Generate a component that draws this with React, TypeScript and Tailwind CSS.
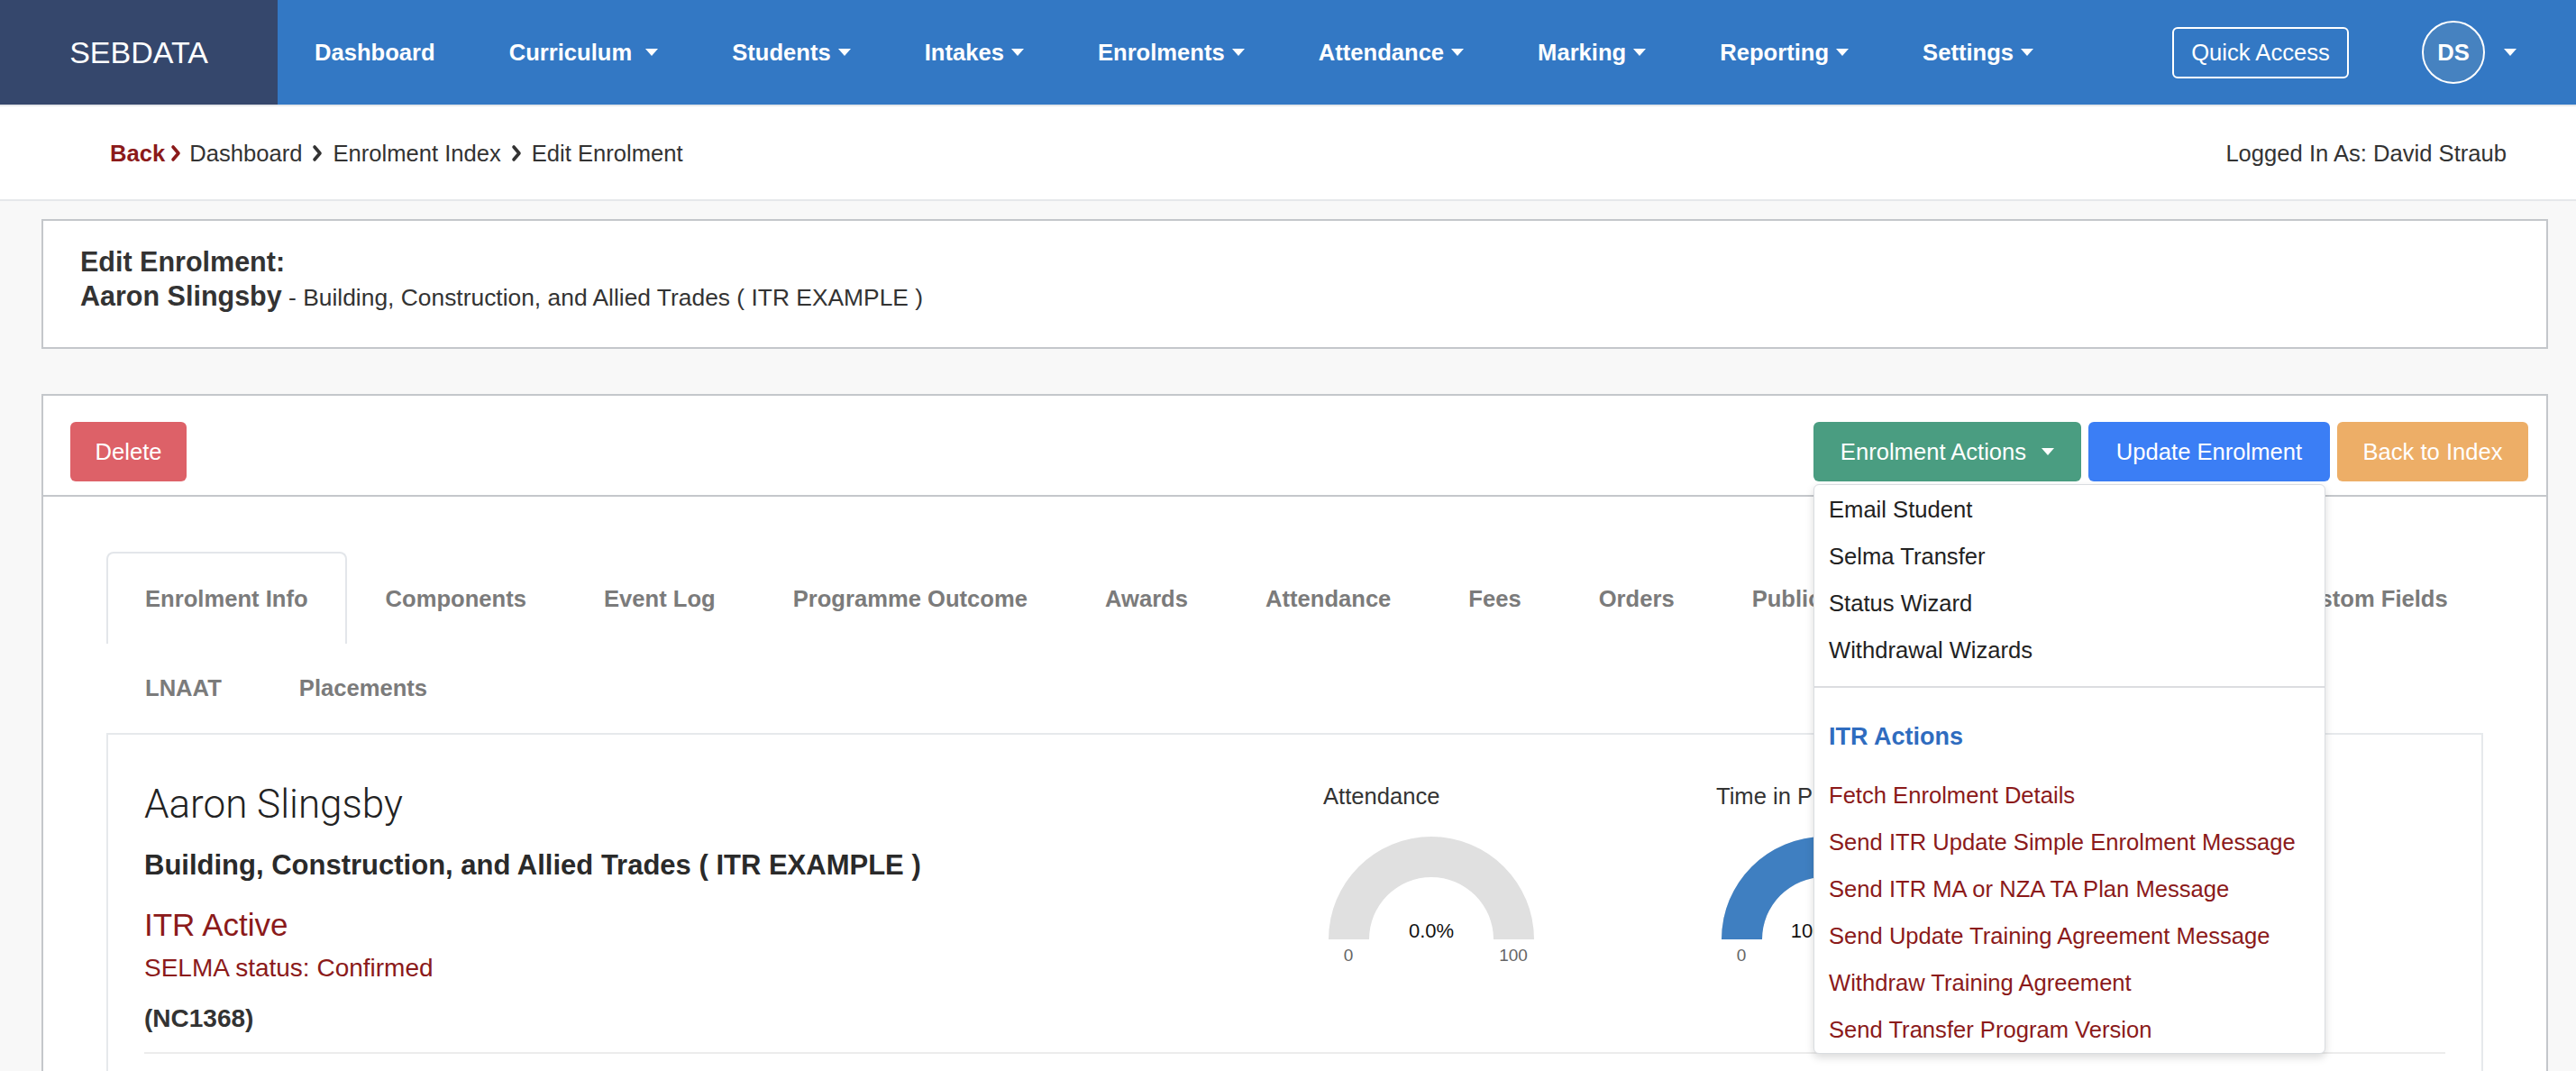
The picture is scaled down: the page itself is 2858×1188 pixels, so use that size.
import React from 'react';

const navItems = [
  { label: 'Dashboard', caret: false },
  { label: 'Curriculum', caret: true },
  { label: 'Students', caret: true },
  { label: 'Intakes', caret: true },
  { label: 'Enrolments', caret: true },
  { label: 'Attendance', caret: true },
  { label: 'Marking', caret: true },
  { label: 'Reporting', caret: true },
  { label: 'Settings', caret: true },
];

const tabsRowOne = [
  'Enrolment Info',
  'Components',
  'Event Log',
  'Programme Outcome',
  'Awards',
  'Attendance',
  'Fees',
  'Orders',
  'Public Funding',
  'Related Documents',
  'Custom Fields',
];

const tabsRowTwo = ['LNAAT', 'Placements'];

const generalActions = ['Email Student', 'Selma Transfer', 'Status Wizard', 'Withdrawal Wizards'];

const itrActions = [
  'Fetch Enrolment Details',
  'Send ITR Update Simple Enrolment Message',
  'Send ITR MA or NZA TA Plan Message',
  'Send Update Training Agreement Message',
  'Withdraw Training Agreement',
  'Send Transfer Program Version',
];

const Caret: React.FC<{ className?: string }> = ({ className = '' }) => (
  <span className={'inline-block h-0 w-0 border-x-[7px] border-t-[8px] border-x-transparent border-t-white ' + className} />
);

const Chevron: React.FC<{ color: string }> = ({ color }) => (
  <svg width="12" height="20" viewBox="0 0 12 20" className="shrink-0">
    <polyline points="3,3 9,10 3,17" fill="none" stroke={color} strokeWidth="3.6" strokeLinecap="round" strokeLinejoin="round" />
  </svg>
);

// half-donut gauge, drawn the way the charting lib renders it
const Gauge: React.FC<{ label: string; pct: number; color: string; valueText: string }> = ({ label, pct, color, valueText }) => {
  const cx = 120;
  const cy = 140;
  const R = 114;
  const r = 69;
  const bg = `M ${cx - R} ${cy} A ${R} ${R} 0 0 1 ${cx + R} ${cy} L ${cx + r} ${cy} A ${r} ${r} 0 0 0 ${cx - r} ${cy} Z`;
  const t = Math.PI * (1 - pct);
  const ox = cx + R * Math.cos(t);
  const oy = cy - R * Math.sin(t);
  const ix = cx + r * Math.cos(t);
  const iy = cy - r * Math.sin(t);
  const val = `M ${cx - R} ${cy} A ${R} ${R} 0 0 1 ${ox} ${oy} L ${ix} ${iy} A ${r} ${r} 0 0 0 ${cx - r} ${cy} Z`;

  return (
    <div className="w-[436px] shrink-0">
      <div className="text-[25.6px] leading-[38px] text-[#333]">{label}</div>
      <svg width="260" height="180" viewBox="0 0 260 180" className="block">
        <path d={bg} fill="#e0e0e0" />
        {pct > 0 && <path d={val} fill={color} />}
        <text x={cx} y="138" textAnchor="middle" fontSize="22" fill="#111" fontFamily="Liberation Sans, Arial, sans-serif">
          {valueText}
        </text>
        <text x="28" y="164" textAnchor="middle" fontSize="19" fill="#666" fontFamily="Liberation Sans, Arial, sans-serif">
          0
        </text>
        <text x="211" y="164" textAnchor="middle" fontSize="19" fill="#666" fontFamily="Liberation Sans, Arial, sans-serif">
          100
        </text>
      </svg>
    </div>
  );
};

const ActionsMenu: React.FC = () => (
  <div className="absolute left-0 top-[69px] z-10 w-[568px] rounded-[6px] border border-[#d9dce0] bg-white pt-[1px] shadow-[0_4px_10px_rgba(0,0,0,0.15)]">
    {generalActions.map((a) => (
      <div key={a} className="flex h-[52px] items-center px-[16px] text-[25.6px] text-[#222]">
        {a}
      </div>
    ))}
    <div className="mt-[14px] h-[2px] bg-[#dcdde0]" />
    <div className="px-[16px] pb-[20px] pt-[35px] text-[27px] font-bold leading-[38px] text-[#2f6cbf]">ITR Actions</div>
    {itrActions.map((a) => (
      <div key={a} className="flex h-[52px] items-center px-[16px] text-[25.6px] text-[#8b1a1a]">
        {a}
      </div>
    ))}
  </div>
);

export default function App() {
  return (
    <div className="min-h-screen w-full bg-[#f8f8f8] font-['Liberation_Sans',Arial,sans-serif] text-[#333]">
      {/* Top nav */}
      <header className="flex h-[116px] bg-[#3378c4] text-white">
        <div className="flex w-[308px] shrink-0 items-center justify-center bg-[#35476c] text-[34px]">SEBDATA</div>
        <nav className="flex items-center">
          {navItems.map((item) => (
            <a key={item.label} className="flex items-center px-[41px] text-[25.6px] font-bold">
              {item.label}
              {item.caret && <Caret className={item.label === 'Curriculum' ? 'ml-[15px]' : 'ml-[8px]'} />}
            </a>
          ))}
        </nav>
        <div className="ml-auto flex items-center pr-[66px]">
          <button className="h-[57px] w-[196px] rounded-[6px] border-2 border-white text-[25.6px]">Quick Access</button>
          <div className="ml-[81px] flex h-[70px] w-[70px] items-center justify-center rounded-full border-2 border-white bg-[#4682c0] text-[25.6px] font-bold">
            DS
          </div>
          <Caret className="ml-[21px]" />
        </div>
      </header>

      {/* Breadcrumb */}
      <div className="flex h-[107px] items-center justify-between border-y-2 border-[#e6e8eb] bg-white pl-[122px] pr-[77px] text-[25.6px]">
        <div className="flex items-center pt-[2px]">
          <span className="font-bold text-[#8b1a1a]">Back</span>
          <span className="ml-[6px] mr-[9px] flex">
            <Chevron color="#8b1a1a" />
          </span>
          <span>Dashboard</span>
          <span className="mx-[11px] flex">
            <Chevron color="#333" />
          </span>
          <span>Enrolment Index</span>
          <span className="mx-[11px] flex">
            <Chevron color="#333" />
          </span>
          <span>Edit Enrolment</span>
        </div>
        <div className="pt-[2px]">Logged In As: David Straub</div>
      </div>

      {/* Title card */}
      <div className="ml-[46px] mr-[31px] mt-[20px] border-2 border-[#c4c7cb] bg-white pb-[32px] pl-[41px] pt-[26px]">
        <div className="text-[30.5px] font-bold leading-[38px]">Edit Enrolment:</div>
        <div className="leading-[38px]">
          <span className="text-[30.5px] font-bold">Aaron Slingsby</span>
          <span className="text-[26.4px]"> - Building, Construction, and Allied Trades ( ITR EXAMPLE )</span>
        </div>
      </div>

      {/* Main card */}
      <div className="ml-[46px] mr-[31px] mt-[50px] border-2 border-b-0 border-[#c4c7cb] bg-white">
        <div className="flex items-center border-b-2 border-[#c4c7cb] pb-[15px] pl-[30px] pr-[20px] pt-[29px]">
          <button className="flex h-[66px] w-[129px] items-center justify-center rounded-[6px] bg-[#dd6168] text-[25.6px] text-white">
            Delete
          </button>
          <div className="ml-auto flex items-center gap-[8px]">
            <div className="relative">
              <button className="flex h-[66px] w-[297px] items-center justify-center rounded-[6px] bg-[#4a9d81] text-[25.6px] text-white">
                Enrolment Actions
                <Caret className="ml-[17px]" />
              </button>
              <ActionsMenu />
            </div>
            <button className="flex h-[66px] w-[268px] items-center justify-center rounded-[6px] bg-[#3b7ef5] text-[25.6px] text-white">
              Update Enrolment
            </button>
            <button className="flex h-[66px] w-[212px] items-center justify-center rounded-[6px] bg-[#edae67] text-[25.6px] text-white">
              Back to Index
            </button>
          </div>
        </div>

        <div className="px-[70px] pt-[61px]">
          {/* Tabs */}
          <div className="flex h-[102px]">
            {tabsRowOne.map((t, i) => (
              <div
                key={t}
                className={
                  'flex items-center whitespace-nowrap rounded-t-[8px] border-2 border-b-0 px-[41px] text-[25.6px] font-bold text-[#7b7b7b] ' +
                  (i === 0 ? 'border-[#e3e6ea] bg-white' : 'border-transparent')
                }
              >
                {t}
              </div>
            ))}
          </div>
          <div className="flex h-[99px]">
            {tabsRowTwo.map((t) => (
              <div key={t} className="flex items-center whitespace-nowrap border-2 border-transparent px-[41px] text-[25.6px] font-bold text-[#7b7b7b]">
                {t}
              </div>
            ))}
          </div>

          {/* Tab panel */}
          <div className="border-2 border-b-0 border-[#e6e9ec] px-[40px] pb-[80px] pt-[49px]">
            <div className="flex">
              <div className="w-[1308px] shrink-0">
                <div className="mt-[2px] font-['Roboto',Arial,sans-serif] text-[44px] font-light leading-[52px] text-[#222]">Aaron Slingsby</div>
                <div className="mt-[22px] text-[31px] font-bold leading-[40px] text-[#2a2a2a]">
                  Building, Construction, and Allied Trades ( ITR EXAMPLE )
                </div>
                <div className="mt-[24px] text-[35px] leading-[44px] text-[#8b1a1a]">ITR Active</div>
                <div className="mt-[8px] text-[28px] leading-[36px] text-[#8b1a1a]">SELMA status: Confirmed</div>
                <div className="mt-[20px] text-[28px] font-bold leading-[36px]">(NC1368)</div>
              </div>
              <Gauge label="Attendance" pct={0} color="#3f7fc1" valueText="0.0%" />
              <Gauge label="Time in Programme" pct={1} color="#3f7fc1" valueText="100.0%" />
            </div>
            <div className="mt-[19px] h-[2px] bg-[#ececec]" />
            <div className="h-[200px]" />
          </div>
        </div>
      </div>
    </div>
  );
}
